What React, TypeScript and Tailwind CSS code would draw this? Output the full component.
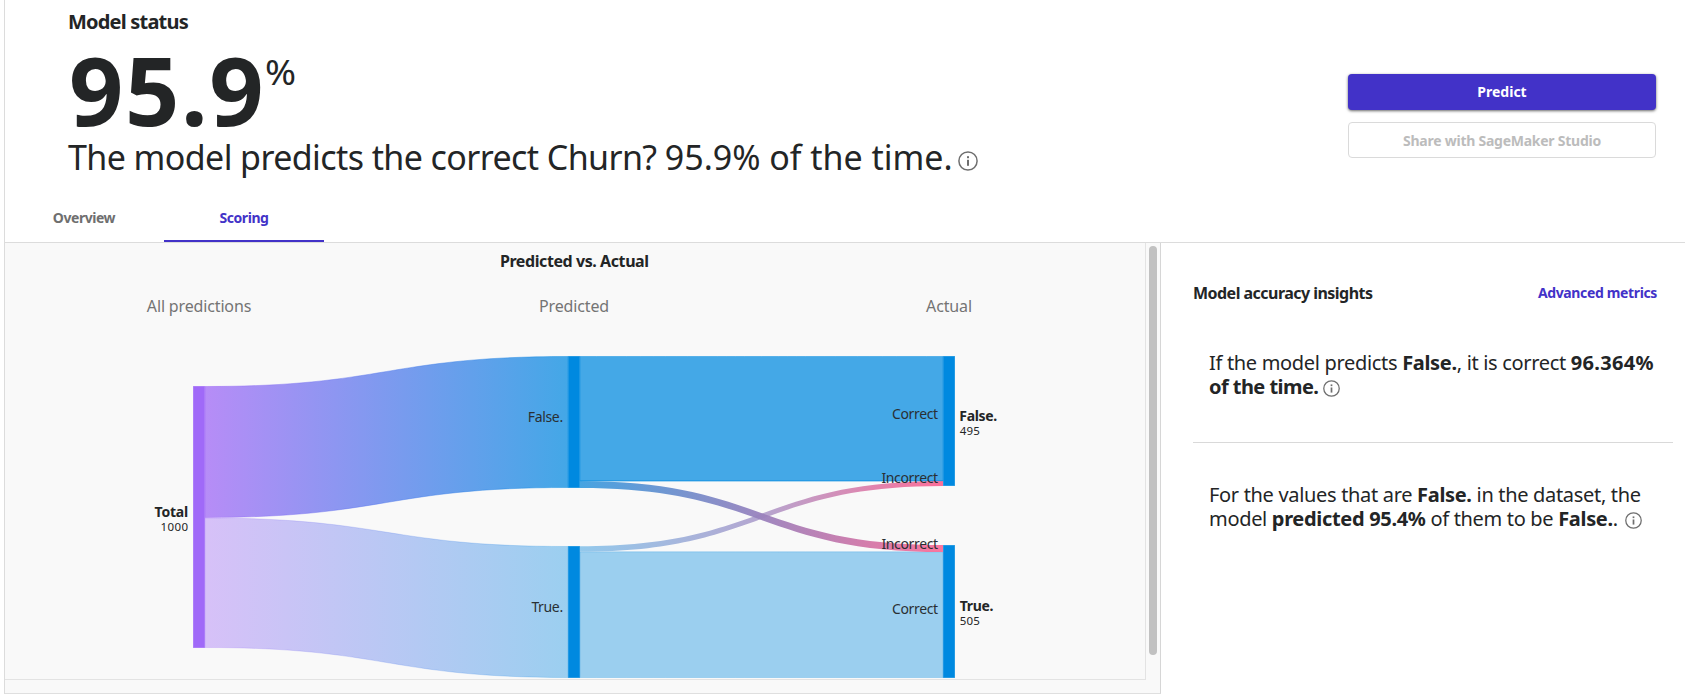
import type { ReactNode } from "react";

const FONT = "font-['Noto_Sans','Open_Sans',sans-serif]";

function InfoIcon({ size, className = "" }: { size: number; className?: string }) {
  return (
    <svg width={size} height={size} viewBox="0 0 20 20" fill="none" className={className} aria-hidden="true">
      <circle cx="10" cy="10" r="9.1" stroke="#6f6f6f" strokeWidth="1.5" />
      <rect x="9" y="5.2" width="2" height="2" fill="#6f6f6f" />
      <rect x="9" y="8.8" width="2" height="6" fill="#6f6f6f" />
    </svg>
  );
}

/* Closed ribbon between two vertical spans. */
function ribbon(x0: number, top0: number, bottom0: number, x1: number, top1: number, bottom1: number) {
  const m = (x0 + x1) / 2;
  return `M${x0} ${top0}C${m} ${top0} ${m} ${top1} ${x1} ${top1}V${bottom1}C${m} ${bottom1} ${m} ${bottom0} ${x0} ${bottom0}Z`;
}

type LinkSpec = { d: string; paint: string; opacity: number };

const links: LinkSpec[] = [
  { d: ribbon(205, 386.5, 517.5, 568, 356.5, 487.5), paint: "url(#purple-blue)", opacity: 0.73 },
  { d: ribbon(205, 518, 647.5, 568, 546.5, 677.5), paint: "url(#purple-blue)", opacity: 0.376 },
  { d: ribbon(580, 356.5, 481, 943, 356.5, 481), paint: "#0089e0", opacity: 0.73 },
  { d: ribbon(580, 551.8, 677.5, 943, 551.8, 677.5), paint: "#0089e0", opacity: 0.376 },
];

const nodes = [
  { x: 193, y: 386, h: 262, fill: "#a069f8" },
  { x: 568, y: 356, h: 132, fill: "#0089e0" },
  { x: 568, y: 546, h: 132, fill: "#0089e0" },
  { x: 943, y: 356, h: 130, fill: "#0089e0" },
  { x: 943, y: 545, h: 133, fill: "#0089e0" },
];

function SankeyChart() {
  return (
    <svg width="1140" height="436" viewBox="5 243 1140 436" className="block">
      <defs>
        <linearGradient id="purple-blue" gradientUnits="userSpaceOnUse" x1="205" x2="568" y1="0" y2="0">
          <stop offset="0" stopColor="#9e64f6" />
          <stop offset="1" stopColor="#0089e0" />
        </linearGradient>
        <linearGradient id="missed-false" gradientUnits="userSpaceOnUse" x1="580" x2="943" y1="0" y2="0">
          <stop offset="0" stopColor="#3d9fe0" />
          <stop offset="0.5" stopColor="#9a82bd" />
          <stop offset="1" stopColor="#fb6f99" />
        </linearGradient>
        <linearGradient id="missed-true" gradientUnits="userSpaceOnUse" x1="580" x2="943" y1="0" y2="0">
          <stop offset="0" stopColor="#93c9ec" />
          <stop offset="0.5" stopColor="#b5a6d0" />
          <stop offset="1" stopColor="#fb6f99" />
        </linearGradient>
      </defs>

      {links.map((l) => (
        <path key={l.d} d={l.d} fill={l.paint} fillOpacity={l.opacity} stroke={l.paint} strokeOpacity={l.opacity * 0.6} />
      ))}
      <path d={ribbon(580, 546.2, 551.8, 943, 481, 486)} fill="url(#missed-true)" />
      <path d={ribbon(580, 481, 488, 943, 545, 552)} fill="url(#missed-false)" fillOpacity="0.95" />
      <path d="M580 480.7H943" stroke="#1c95e3" strokeOpacity="0.7" />

      {nodes.map((n) => (
        <rect key={`${n.x}-${n.y}`} x={n.x + 0.5} y={n.y + 0.5} width="11" height={n.h - 1} fill={n.fill} stroke={n.fill} strokeOpacity="0.7" />
      ))}

      <g fill="#232526" textAnchor="middle">
        <text x="574.3" y="266.7" className="text-[16px] font-bold tracking-[-0.42px]">Predicted vs. Actual</text>
        <g fill="#747474" className="text-[16px] tracking-[-0.15px]">
          <text x="199" y="311.7">All predictions</text>
          <text x="574" y="311.7">Predicted</text>
          <text x="949" y="311.7">Actual</text>
        </g>
      </g>

      <g fill="#2a2f33" textAnchor="end" className="text-[14px] tracking-[-0.35px]">
        <text x="562.8" y="422">False.</text>
        <text x="562.8" y="612">True.</text>
        <text x="937.8" y="419">Correct</text>
        <text x="937.8" y="483.3">Incorrect</text>
        <text x="937.8" y="549.3">Incorrect</text>
        <text x="937.8" y="614">Correct</text>
      </g>

      <g fill="#232526">
        <text x="188" y="517" textAnchor="end" className="text-[14px] font-bold tracking-[-0.2px]">Total</text>
        <text x="188.5" y="531" textAnchor="end" className="text-[11.5px] tracking-[0.45px]">1000</text>
        <text x="959.3" y="421" className="text-[14px] font-bold tracking-[-0.35px]">False.</text>
        <text x="959.7" y="435" className="text-[11.5px] tracking-[0.15px]">495</text>
        <text x="959.8" y="611" className="text-[14px] font-bold tracking-[-0.35px]">True.</text>
        <text x="959.7" y="625" className="text-[11.5px] tracking-[0.15px]">505</text>
      </g>
    </svg>
  );
}

function Tab({ active = false, children }: { active?: boolean; children: ReactNode }) {
  return (
    <button
      className={`h-12 w-40 border-b-2 pt-0.5 text-[14px] leading-5 font-bold tracking-[-0.45px] ${
        active ? "border-[#4232c8] text-[#4232c8]" : "border-transparent text-[#6f6f6f]"
      }`}
    >
      {children}
    </button>
  );
}

export default function App() {
  return (
    <div className={`flex h-[694px] w-[1685px] overflow-hidden bg-white pl-1 text-[#232526] ${FONT}`}>
      <div className="flex w-full flex-col border-l border-[#dcdcdc]">
        <header className="flex h-[243px] shrink-0 flex-col justify-between border-b border-[#dcdcdc]">
          <div className="flex justify-between pr-[29px] pl-[63px]">
            <div className="pt-[10px]">
              <h2 className="text-[20px] leading-6 font-bold tracking-[-0.8px]">Model status</h2>
              <div className="mt-[15px] flex h-20">
                <span className="pl-px text-[95px] leading-20 font-bold tracking-[1.6px]">95.9</span>
                <span className="origin-left scale-x-110 pt-[3px] text-[34px] leading-10">%</span>
              </div>
              <p className="mt-[6px] flex items-center text-[34px] leading-11 whitespace-pre">
                <span className="tracking-[-0.59px]">The model predicts the correct Churn? </span>
                <span className="tracking-[-0.02px]">95.9% of the time.</span>
                <InfoIcon size={20} className="mt-[7px] ml-[5px]" />
              </p>
            </div>
            <div className="flex w-[308px] flex-col gap-3 pt-[74px]">
              <button className="h-9 rounded-[4px] bg-[#4232c8] pb-0.5 text-[14px] font-bold text-white shadow-[0_1px_3px_rgba(0,0,0,0.6)]">
                Predict
              </button>
              <button className="h-9 rounded-[4px] border border-[#dadada] bg-white text-[14px] font-bold tracking-[-0.25px] text-[#bcbcbc]">
                Share with SageMaker Studio
              </button>
            </div>
          </div>
          <nav className="-ml-px flex">
            <Tab>Overview</Tab>
            <Tab active>Scoring</Tab>
          </nav>
        </header>

        <div className="flex min-h-0 flex-1">
          <section className="flex w-[1156px] shrink-0 border-r border-b border-r-[#d6d6d6] border-b-[#dfdfdf] bg-[#f9f9f9]">
            <div className="h-[437px] w-[1141px] border-r border-b border-[#e3e3e3]">
              <SankeyChart />
            </div>
            <div className="mt-[3px] ml-[3px] h-[409px] w-2 rounded-full bg-[#c1c1c1]" />
          </section>

          <aside className="flex-1 pt-[38px] pr-3 pl-8">
            <div className="flex items-center justify-between pr-4">
              <h3 className="text-[16px] leading-6 font-bold tracking-[-0.53px]">Model accuracy insights</h3>
              <a className="text-[14px] leading-6 font-bold tracking-[-0.36px] text-[#4232c8]">Advanced metrics</a>
            </div>
            <p className="mt-[46px] pl-4 text-[20px] leading-6 tracking-[-0.32px]">
              If the model predicts <b>False.</b>, it is correct <b className="tracking-[0.3px]">96.364%</b>
              <br />
              <b className="tracking-[-0.55px]">of the time.</b> <InfoIcon size={17} className="inline-block align-[-3px]" />
            </p>
            <hr className="mt-[43px] border-[#d9d9d9]" />
            <p className="mt-[40px] pl-4 text-[20px] leading-6 tracking-[-0.32px]">
              For the values that are <b>False.</b> in the dataset, the
              <br />
              model <b>predicted 95.4%</b> of them to be <b>False.</b>.{" "}
              <InfoIcon size={17} className="ml-0.5 inline-block align-[-3px]" />
            </p>
          </aside>
        </div>
      </div>
    </div>
  );
}
